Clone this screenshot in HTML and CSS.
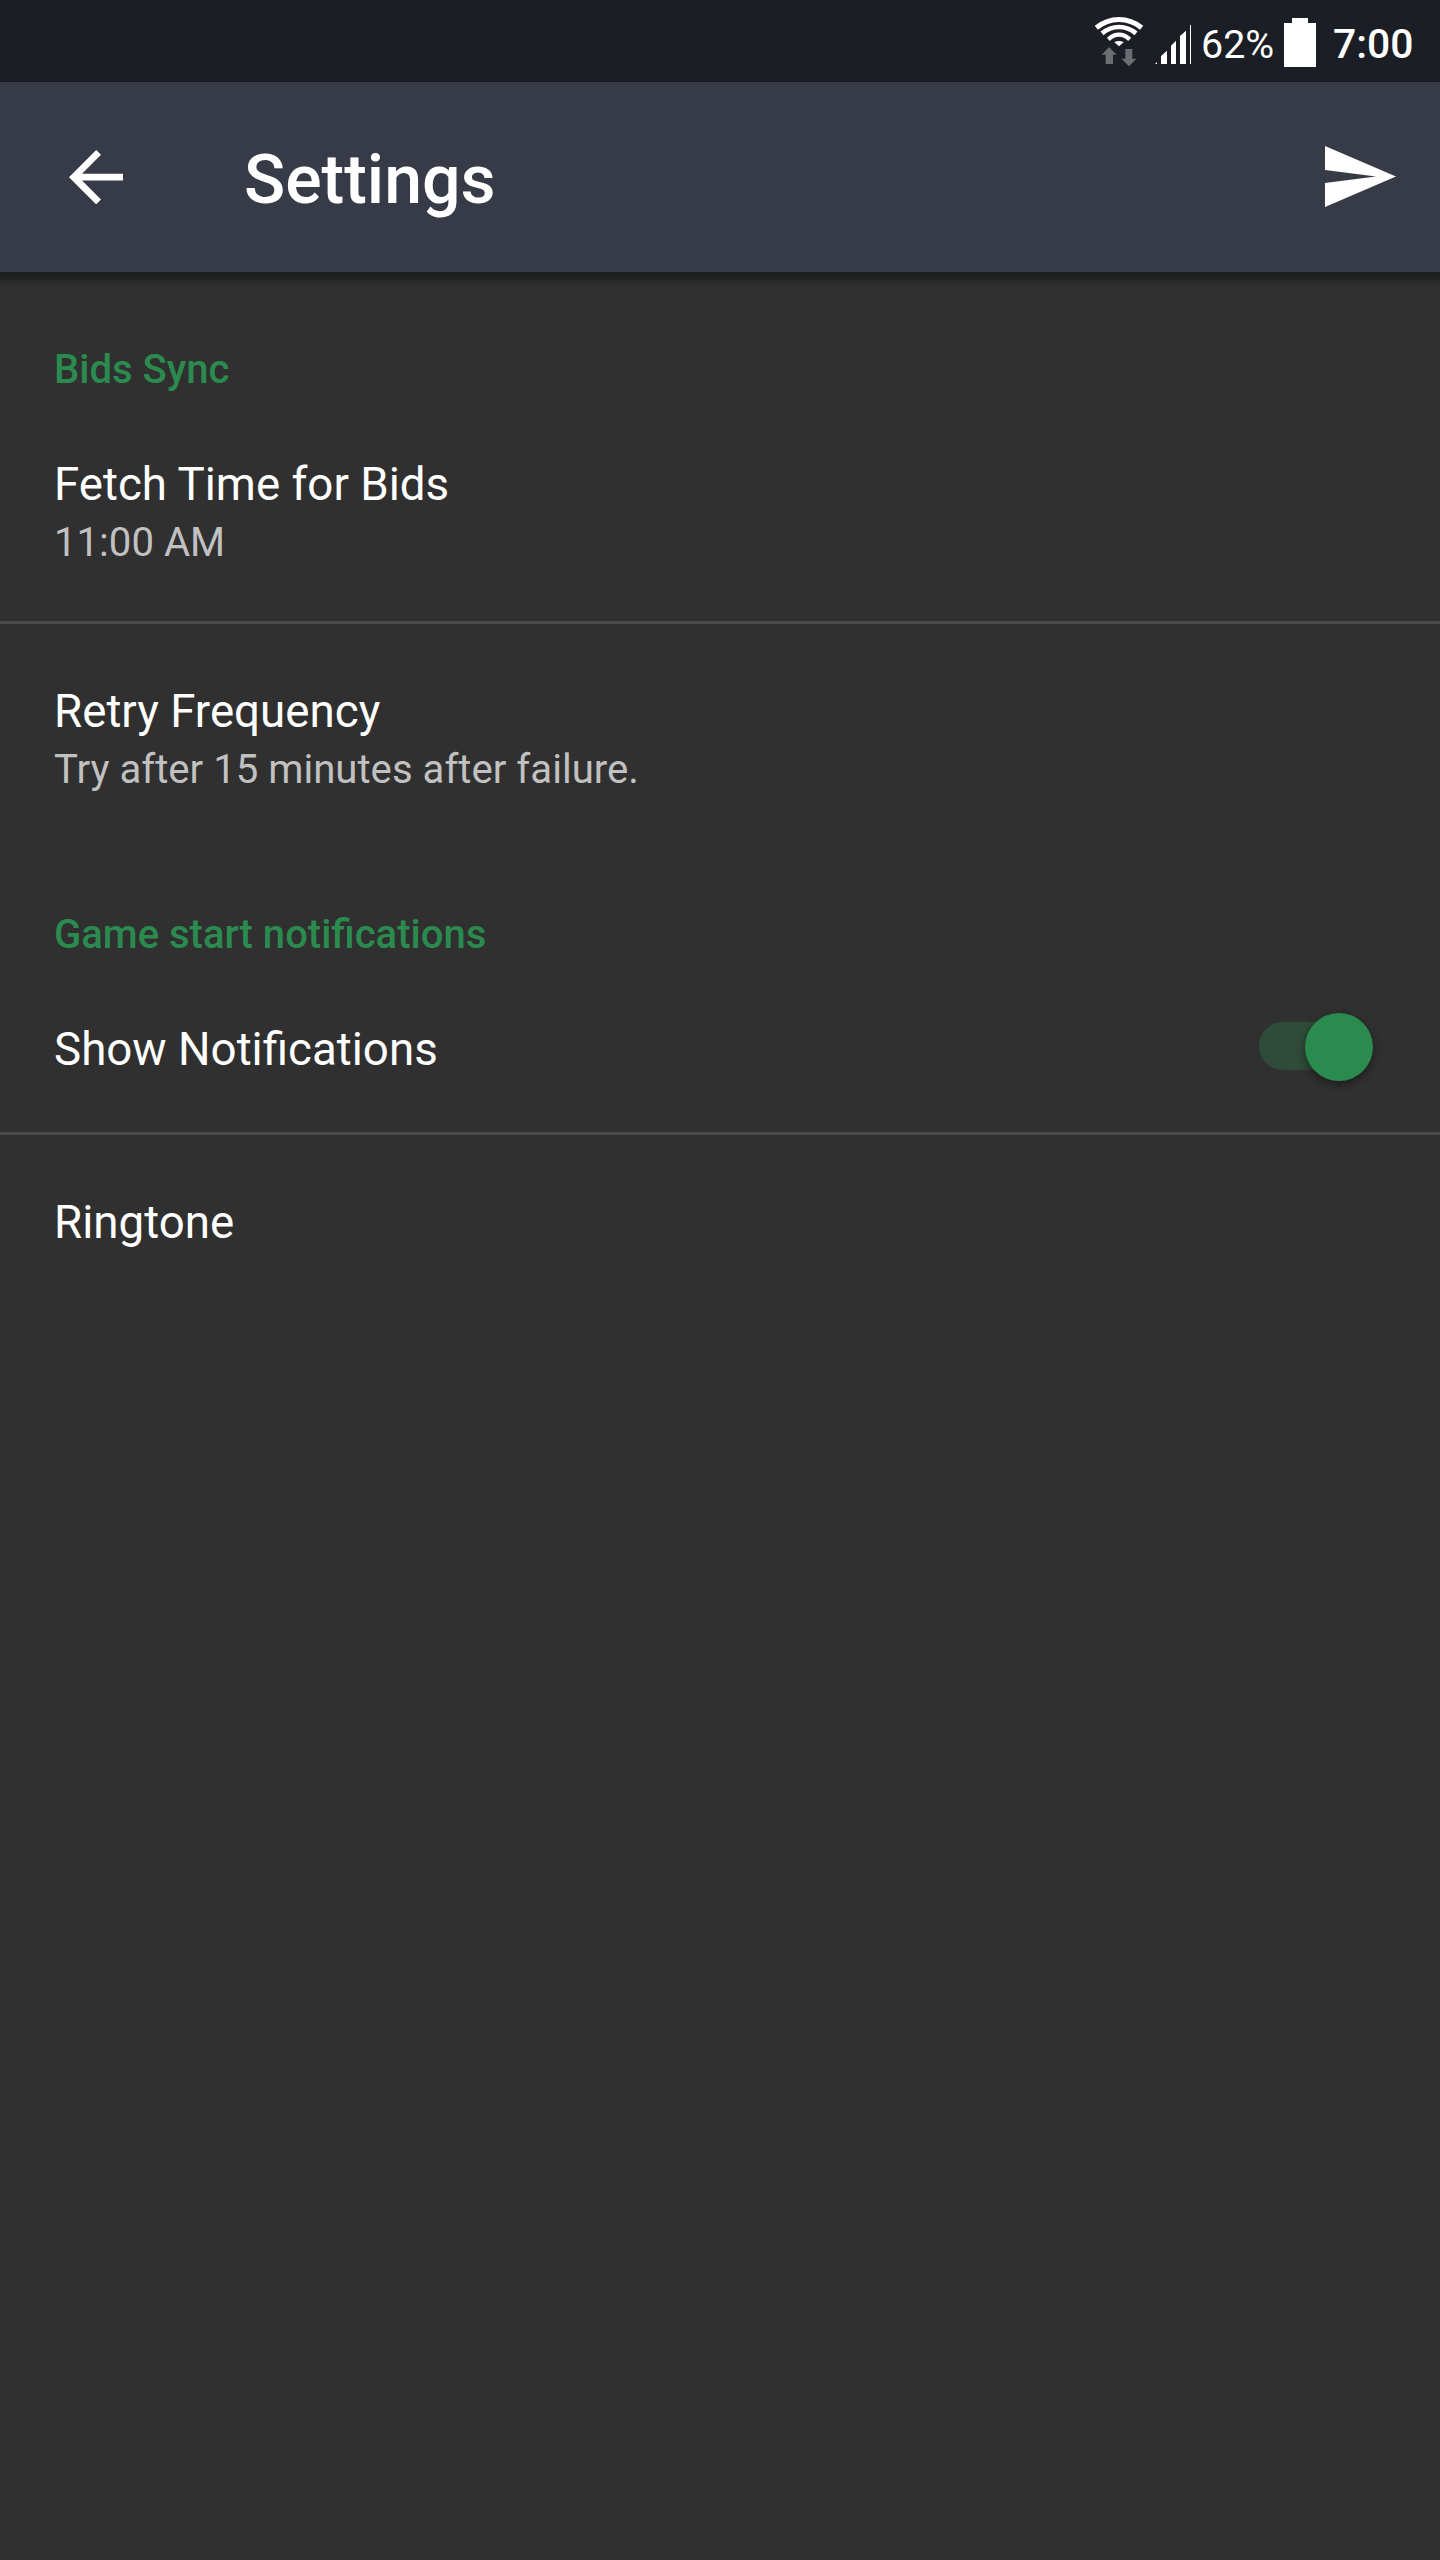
FILE: index.html
```html
<!DOCTYPE html>
<html lang="en">
<head>
<meta charset="utf-8">
<title>Settings</title>
<link rel="stylesheet" href="styles.css">
</head>
<body>
<div class="status-bar">
  <svg class="wifi" viewBox="42 48 150 156" width="50" height="52">
    <g fill="none" stroke="#fff">
      <path stroke-width="15" d="M49 83Q80 58.500 117 58.500T185 83"/>
      <path stroke-width="14" d="M66 100Q89 81 117 81T168 100"/>
      <path stroke-width="13" d="M85 118Q100 104 117 104T149 118"/>
    </g>
    <path fill="#fff" d="M103 127Q117 119 131 127L117 139Z"/>
    <path fill="#6c6d70" d="M87 141L110 164H99V192H77V164H65ZM136 147H157V176H169L147 199L124 176H136Z"/>
  </svg>
  <svg class="signal" viewBox="222 72 114 120" width="38" height="40">
    <path fill="#fff" d="M225 192L231 186V192ZM243 192V168L261 152V192ZM273 192V137L288 122V192ZM300 192V108L318 92V192ZM330 192V76L333 74V192Z"/>
  </svg>
  <span class="percent">62%</span>
  <svg class="battery" viewBox="0 0 32 49" width="32" height="49">
    <path fill="#fff" d="M8 0H24V5H32V49H0V5H8Z"/>
  </svg>
  <span class="clock">7:00</span>
</div>
<header class="app-bar">
  <svg class="back" viewBox="4 4 16 16" width="54.4" height="54.4"><path fill="#fff" d="M20 11H7.83l5.59-5.59L12 4l-8 8 8 8 1.41-1.41L7.83 13H20v-2z"/></svg>
  <h1 class="title">Settings</h1>
  <svg class="send" viewBox="0 0 71 61" width="71" height="61"><path fill="#fff" d="M0 0L71 30.500L0 61V37L51 30.500L0 24Z"/></svg>
</header>
<main class="list">
  <h2 class="category">Bids Sync</h2>
  <div class="item divided">
    <div class="name">Fetch Time for Bids</div>
    <div class="summary">11:00 AM</div>
  </div>
  <div class="item">
    <div class="name">Retry Frequency</div>
    <div class="summary">Try after 15 minutes after failure.</div>
  </div>
  <h2 class="category">Game start notifications</h2>
  <div class="item single divided">
    <div class="name">Show Notifications</div>
    <div class="switch"><div class="thumb"></div></div>
  </div>
  <div class="item single">
    <div class="name">Ringtone</div>
  </div>
</main>
</body>
</html>
```
FILE: styles.css
```css
* { box-sizing: border-box; }
body {
  margin: 0;
  min-height: 2560px;
  background: #303030;
  color: #fff;
  font-family: Roboto, sans-serif;
}
svg { display: block; flex: none; }
.status-bar {
  display: flex;
  align-items: flex-start;
  height: 82px;
  padding-left: 1094px;
  background: #1b1e25;
  white-space: nowrap;
}
.wifi { margin-top: 16px; }
.signal { margin: 24px 0 0 10px; }
.percent {
  width: 82px;
  margin-left: 9px;
  font-size: 39.4px;
  line-height: 89px;
}
.battery { margin: 18px 0 0 1px; }
.clock {
  margin-left: 17px;
  font-size: 40.8px;
  font-weight: 500;
  line-height: 88px;
}
.app-bar {
  height: 190px;
  display: flex;
  align-items: flex-start;
  background: #373b47;
}
.back { margin: 68px 0 0 69px; }
.title {
  flex: 1;
  margin: 0 0 0 120.6px;
  font-size: 68px;
  font-weight: 500;
  line-height: 196px;
}
.send { margin: 64px 44px 0 0; }
.list {
  padding-top: 14px;
  background: linear-gradient(#1b1d20 0, #1d1f20 4px, #242524 8px, #2d2d2d 12px, #303030 15px) no-repeat;
}
.category {
  height: 111px;
  margin: 0;
  padding: 56px 54px 0;
  color: #2b8b4f;
  font-size: 40px;
  font-weight: 500;
  line-height: 55px;
}
.item {
  height: 227px;
  padding: 56px 54px 0;
}
.divided { border-bottom: 3px solid #4a4a4a; }
.name { font-size: 45.7px; line-height: 63px; }
.summary {
  margin-top: -1px;
  color: #c1c1c1;
  font-size: 40.15px;
  line-height: 55px;
}
.single {
  display: flex;
  justify-content: space-between;
  height: 173px;
}
.switch {
  display: flex;
  width: 114px;
  height: 48px;
  margin: 4px 13px 0 0;
  border-radius: 24px;
  background: linear-gradient(90deg, #2f4b39 80px, transparent 80px);
}
.thumb {
  width: 68px;
  height: 68px;
  margin: -9px 0 0 46px;
  border-radius: 50%;
  background: #2b8b4f;
  box-shadow: 0 3px 8px rgba(0, 0, 0, .45);
}
```
